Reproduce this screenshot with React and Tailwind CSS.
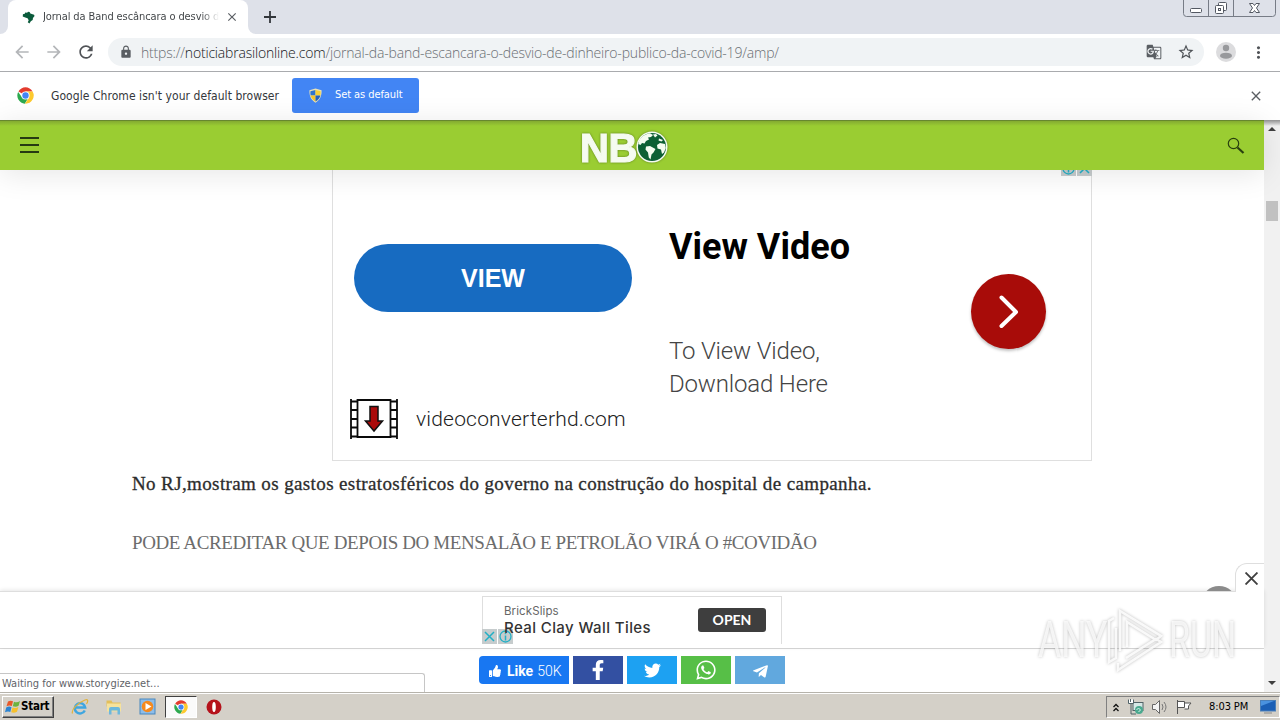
import {
  FaFacebookF,
  FaThumbsUp,
  FaTwitter,
  FaWhatsapp,
  FaTelegramPlane,
} from "react-icons/fa";
import {
  MdArrowBack,
  MdArrowForward,
  MdClose,
  MdLock,
  MdMoreVert,
  MdRefresh,
  MdStarBorder,
  MdGTranslate,
} from "react-icons/md";

const ChromeLogo = ({ className }) => (
  <svg viewBox="0 0 48 48" className={className}>
    <path d="M24 24 4.1 12.5A23 23 0 0 1 43.9 12.5L24 12.5Z" fill="#e33b2e" />
    <path d="M3.2 14A23 23 0 0 0 22 47L33 29 24 34 14 29Z" fill="#2da94f" />
    <path d="M24 12.5H43.9A23 23 0 0 1 22.5 47L34 29.5Z" fill="#fdc92e" />
    <circle cx="24" cy="24" r="11.5" fill="#fff" />
    <circle cx="24" cy="24" r="9" fill="#4285f4" />
  </svg>
);

const Brazil = () => (
  <svg viewBox="0 0 14 14" className="h-[13px] w-[13px]">
    <path
      d="M1 3.5 3 3 3.500 1.500 5.500 2 6.500 .8 8.200 1.200 9 2.800 13 4 13.500 5.500 11.800 7.500 11.500 9.800 9.500 11 8 13.500 6.200 12 7.200 10 6 7.800 3.500 7 .8 5.800Z"
      fill="#0b5b3c"
    />
  </svg>
);

const Shield = () => (
  <svg viewBox="0 0 16 16" className="h-[15px] w-[15px]">
    <path d="M8 .5 14.5 2.5C14.7 8 13 13 8 15.7 3 13 1.3 8 1.5 2.5Z" fill="#e8e2b8" />
    <path d="M8 2v6H2.8C2.5 6.500 2.500 5 2.600 3.500Z" fill="#2f74d0" />
    <path d="M8 2v6h5.200c.3-1.500.3-3 .2-4.500Z" fill="#f7d038" />
    <path d="M8 8v6.400C5 12.700 3.500 10.500 2.800 8Z" fill="#f7c52a" />
    <path d="M8 8v6.400c3-1.700 4.500-3.900 5.200-6.400Z" fill="#2561bd" />
  </svg>
);

const Globe = () => (
  <svg viewBox="0 0 32 32" className="-ml-[1px] h-[32px] w-[32px] shrink-0">
    <circle cx="16" cy="16" r="15.500" fill="#f5fbf0" />
    <circle cx="16" cy="16" r="14" fill="#0d5f34" />
    <path
      d="M3 10C5 6 9 3 14 2.300L17 4 15 6 12 6.500 13 8.500 10 10 8.500 12.500 6 12 4.500 14 2.300 13Z"
      fill="#f5fbf0"
    />
    <path
      d="M10 15.500 14 15 19.500 18 17.500 21.500 15.500 23.500 14.500 28.500 12.800 26.500 12 21.500 9.500 18.500Z"
      fill="#f5fbf0"
    />
    <path
      d="M21 14 24 12 29 13 29.800 17 28 21.500 26 23 25 18.500 21.500 17.500ZM23 7.500 27 9 25.500 10.500 22.500 9.500Z"
      fill="#f5fbf0"
    />
    <path d="M17 3.500 20 3 21.500 4.500 19 6.500Z" fill="#f5fbf0" />
  </svg>
);

const AdInfo = ({ flip }) => (
  <svg
    viewBox="0 0 31 15"
    className={flip ? "h-[15px] w-[31px] -scale-x-100" : "h-[15px] w-[31px]"}
  >
    <path d="M0 0h15v15H0zM16 0h15v15H16z" fill="#c6cccd" />
    <circle cx="7.500" cy="7.500" r="5.500" fill="none" stroke="#22b0c6" strokeWidth="1.300" />
    <path d="M7.500 3.800v1.500M7.500 6.500v5" stroke="#22b0c6" strokeWidth="1.500" />
    <path d="M19 3l9 9M28 3l-9 9" stroke="#22b0c6" strokeWidth="1.500" />
  </svg>
);

const FilmIcon = () => (
  <svg viewBox="0 0 48 40" className="h-[40px] w-[48px]">
    <path
      d="M1 0v40M47 0v40M7.500 1h33v37h-33zM1 2.500h6M1 11h6M1 20h6M1 28.500h6M1 37.500h6M41 2.500h6M41 11h6M41 20h6M41 28.500h6M41 37.500h6"
      fill="none"
      stroke="#0a0a0a"
      strokeWidth="1.800"
    />
    <path
      d="M20 7.500h8v14.500h4.500L24 32 15.500 22H20Z"
      fill="#ab0b0b"
      stroke="#111"
      strokeWidth="1.500"
    />
  </svg>
);

const WindowButtons = () => (
  <svg viewBox="0 0 94 17" className="mr-[3px] h-[17px] w-[94px]">
    <path
      d="M.5 0v13.500a3 3 0 0 0 3 3h86a3 3 0 0 0 3-3V0M25.500 0v16M50.500 0v16"
      fill="none"
      stroke="#777c86"
    />
    <g fill="#fff" stroke="#535862">
      <rect x="7.500" y="8.500" width="11" height="4" rx="1" />
      <rect x="35.500" y="2.500" width="8" height="8" rx="1" />
      <rect x="32.500" y="5.500" width="8" height="8" rx="1" />
      <rect x="35.500" y="8.500" width="2" height="2" />
      <path d="M66.500 3.500h3.500l1.500 2 1.500-2h3.500l-3 4.500 3 4.500H73l-1.500-2-1.500 2h-3.500l3-4.500Z" />
    </g>
  </svg>
);

const TabStrip = () => (
  <div className="flex h-[34px] items-start justify-between bg-[#dee1e9]">
    <div className="flex h-[34px] items-end">
      <div className="h-2 w-2 bg-white">
        <div className="h-2 w-2 rounded-br-lg bg-[#dee1e9]" />
      </div>
      <div className="flex h-[34px] w-[240px] items-center rounded-t-lg bg-white pl-[14px]">
        <Brazil />
        <div className="ml-[8px] w-[176px] overflow-hidden bg-linear-to-r from-[#3c4043] from-90% to-transparent bg-clip-text font-['DejaVu_Sans_Condensed','DejaVu_Sans',sans-serif] text-[11px] tracking-[-0.1px] whitespace-nowrap text-transparent">
          Jornal da Band escâncara o desvio d
        </div>
        <MdClose className="ml-[6px] h-[14px] w-[14px] text-[#5a5e63]" />
      </div>
      <div className="h-2 w-2 bg-white">
        <div className="h-2 w-2 rounded-bl-lg bg-[#dee1e9]" />
      </div>
      <svg viewBox="0 0 12 12" className="mb-[11px] ml-[8px] h-[12px] w-[12px]">
        <path d="M6 0v12M0 6h12" stroke="#33373c" strokeWidth="1.800" />
      </svg>
    </div>
    <WindowButtons />
  </div>
);

const Toolbar = () => (
  <div className="flex h-[38px] items-center border-b border-[#a9abae] bg-white pb-[1px]">
    <MdArrowBack className="ml-[12px] h-[20px] w-[20px] text-[#b4b6b9]" />
    <MdArrowForward className="ml-[12px] h-[20px] w-[20px] text-[#b4b6b9]" />
    <MdRefresh className="ml-[12px] h-[20px] w-[20px] text-[#505357]" />
    <div className="ml-[12px] flex h-[28px] w-[1096px] items-center rounded-full bg-[#f0f3f5]">
      <MdLock className="ml-[11px] h-[14px] w-[14px] text-[#5a5e63]" />
      <div className="ml-[8px] font-['Open_Sans',sans-serif] text-[14px] font-light tracking-[-0.19px] whitespace-nowrap text-[#6a6e73]">
        https://<span className="text-[#15171a]">noticiabrasilonline.com</span>
        /jornal-da-band-escancara-o-desvio-de-dinheiro-publico-da-covid-19/amp/
      </div>
      <MdGTranslate className="ml-auto h-[16px] w-[16px] text-[#5a5e63]" />
      <MdStarBorder className="mr-[9px] ml-[15px] h-[18px] w-[18px] text-[#4f5358]" />
    </div>
    <svg viewBox="0 0 20 20" className="ml-[12px] h-[20px] w-[20px]">
      <circle cx="10" cy="10" r="10" fill="#dcdcde" />
      <circle cx="10" cy="6" r="3.200" fill="#98999c" />
      <ellipse cx="10" cy="13.700" rx="6" ry="3" fill="#98999c" />
    </svg>
    <MdMoreVert className="ml-[13px] h-[19px] w-[19px] text-[#505357]" />
  </div>
);

const DefaultBrowserBar = () => (
  <div className="flex h-[48px] items-center bg-white pb-[1px] font-['DejaVu_Sans_Condensed','DejaVu_Sans',sans-serif]">
    <ChromeLogo className="ml-[17px] h-[17px] w-[17px]" />
    <span className="ml-[17px] w-[229px] text-[12px] tracking-[0.06px] whitespace-nowrap text-[#34373b]">
      Google Chrome isn't your default browser
    </span>
    <button className="ml-[12px] flex h-[35px] w-[127px] items-center rounded-[3px] bg-[#4285f4] pl-[16px] text-[11px] whitespace-nowrap text-white">
      <Shield />
      <span className="ml-[12px] tracking-[-0.08px]">Set as default</span>
    </button>
    <MdClose className="mr-[16px] ml-auto h-[16px] w-[16px] text-[#5a5e63]" />
  </div>
);

const SiteHeader = () => (
  <header className="relative z-10 flex h-[50px] items-center justify-between border-t border-[#67872f] bg-[#9acd32] bg-linear-to-b from-[#84ab31] to-[#9acd32] to-[5px] px-5 shadow-[0_4px_30px_rgba(0,0,0,0.1)]">
    <div className="flex w-[87px] flex-col gap-[5px] pb-[2px]">
      <div className="h-[2px] w-[19px] bg-[#263a12]" />
      <div className="h-[2px] w-[19px] bg-[#263a12]" />
      <div className="h-[2px] w-[19px] bg-[#263a12]" />
    </div>
    <div className="mt-[2px] -ml-[16px] flex items-center font-['Liberation_Sans',sans-serif] text-[40px] leading-none font-bold text-[#f5fbf0] [-webkit-text-stroke:1.2px_#f5fbf0] [filter:drop-shadow(0_0_1px_#5c7f1c)]">
      <span className="pt-[2px] tracking-[-0.5px]">NB</span>
      <Globe />
    </div>
    <div className="flex w-[87px] justify-end">
      <svg viewBox="0 0 18 18" className="-mr-[1px] h-[18px] w-[18px]">
        <circle cx="6.500" cy="6.500" r="5.200" fill="none" stroke="#29400f" strokeWidth="1.200" />
        <path d="M10.500 10.500 16.500 16" stroke="#29400f" strokeWidth="2.200" />
      </svg>
    </div>
  </header>
);

const VideoAd = () => (
  <div className="relative ml-[332px] flex h-[291px] w-[760px] border-x border-b border-[#dfdfdf] bg-white">
    <div className="absolute -top-[9px] -right-[1px]">
      <AdInfo />
    </div>
    <div className="flex w-[336px] flex-col">
      <div className="mt-[74px] ml-[21px] flex h-[68px] w-[278px] items-center justify-center rounded-full bg-[#176bc1] pt-[2px] font-['Liberation_Sans',sans-serif] text-[25px] font-bold text-white">
        VIEW
      </div>
      <div className="mt-[87px] ml-[17px] flex items-center">
        <FilmIcon />
        <span className="ml-[18px] pt-[2px] font-['Roboto',sans-serif] text-[21px] font-light tracking-[0.2px] text-[#222]">
          videoconverterhd.com
        </span>
      </div>
    </div>
    <div className="w-[302px] font-['Roboto',sans-serif]">
      <div className="mt-[56px] text-[36px] leading-[42px] font-bold tracking-[0px] whitespace-nowrap text-black">
        View Video
      </div>
      <div className="mt-[67px] text-[24px] leading-[33px] font-light tracking-[-0.17px] whitespace-nowrap text-[#444]">
        To View Video,
        <br />
        Download Here
      </div>
    </div>
    <div className="mt-[104px] flex h-[75px] w-[75px] items-center justify-center rounded-full bg-[#a80c09] shadow-[0_2px_3px_rgba(0,0,0,0.25)]">
      <svg viewBox="0 0 20 34" className="ml-[1px] h-[34px] w-[20px]">
        <path
          d="M2.500 2.500 17 17 2.500 31"
          fill="none"
          stroke="#fff"
          strokeWidth="4"
          strokeLinecap="round"
          strokeLinejoin="round"
        />
      </svg>
    </div>
  </div>
);

const Article = () => (
  <div className="pl-[132px] font-['Liberation_Serif',serif] whitespace-nowrap">
    <p className="mt-[11px] text-[19px] leading-[24px] tracking-[0.38px] text-[#2c2c2c] [-webkit-text-stroke:0.3px_#2c2c2c]">
      No RJ,mostram os gastos estratosféricos do governo na construção do
      hospital de campanha.
    </p>
    <p className="mt-[35px] text-[19px] leading-[24px] tracking-[-0.39px] text-[#6c6c6c]">
      PODE ACREDITAR QUE DEPOIS DO MENSALÃO E PETROLÃO VIRÁ O #COVIDÃO
    </p>
  </div>
);

const StickyAd = () => (
  <div className="relative flex h-[57px] justify-center border-t border-[#dedede] bg-white pt-[4px] shadow-[0_-1px_4px_rgba(0,0,0,0.1)]">
    <div className="absolute -top-[6px] right-[27px] h-[5px] w-[36px] overflow-hidden">
      <div className="h-[36px] w-[36px] rounded-full bg-[#8b8b8b]" />
    </div>
    <div className="absolute -top-[29px] right-0 flex h-[29px] w-[29px] items-center justify-center rounded-tl-[12px] border-t border-l border-[#dedede] bg-white">
      <svg viewBox="0 0 12 12" className="ml-[3px] h-[13px] w-[13px]">
        <path d="M.5.5l11 11M11.500.5l-11 11" stroke="#3f3f3f" strokeWidth="1.700" />
      </svg>
    </div>
    <div className="relative flex h-[48px] w-[300px] items-start border-x border-t border-[#dedede] pl-[21px] font-['Inter',sans-serif]">
      <div className="absolute bottom-0 -left-[1px]">
        <AdInfo flip />
      </div>
      <div className="relative w-[194px] pt-[7px]">
        <div className="text-[11.500px] leading-[14px] tracking-[0.1px] text-[#666]">BrickSlips</div>
        <div className="mt-[1px] text-[15px] leading-[18px] font-medium tracking-[0.4px] whitespace-nowrap text-[#333]">
          Real Clay Wall Tiles
        </div>
      </div>
      <button className="mt-[11px] h-[24px] w-[68px] rounded-[3px] bg-[#3e3e3e] pb-[2px] font-['Lato',sans-serif] text-[14px] font-bold text-white">
        OPEN
      </button>
    </div>
  </div>
);

const ShareBar = () => (
  <div className="flex h-[44px] justify-center gap-[4px] border-t border-[#d8d8d8] bg-white pt-[7px] text-white shadow-[0_-1px_3px_rgba(0,0,0,0.08)]">
    <div className="flex h-[28px] w-[90px] items-center rounded-l-[4px] bg-[#1877f2] pt-[2px] pl-[10px] font-['Roboto',sans-serif] text-[14px]">
      <FaThumbsUp className="h-[12px] w-[12px]" />
      <b className="ml-[6px]">Like</b>
      <span className="ml-[4px] font-light">50K</span>
    </div>
    <div className="flex h-[28px] w-[50px] items-center justify-center bg-[#3350a2]">
      <FaFacebookF className="h-[20px] w-[20px]" />
    </div>
    <div className="flex h-[28px] w-[50px] items-center justify-center bg-[#1da1f2]">
      <FaTwitter className="h-[17px] w-[17px]" />
    </div>
    <div className="flex h-[28px] w-[50px] items-center justify-center bg-[#57bf47]">
      <FaWhatsapp className="h-[22px] w-[22px]" />
    </div>
    <div className="flex h-[28px] w-[50px] items-center justify-center bg-[#61a8de] pt-[2px]">
      <FaTelegramPlane className="h-[17px] w-[17px]" />
    </div>
  </div>
);

const Scrollbar = () => (
  <div className="flex h-full w-[16px] flex-col items-center bg-linear-to-b from-[#929292] to-[#f1f1f1] to-[6px]">
    <svg viewBox="0 0 8 4" className="mt-[7px] h-[4px] w-[8px]">
      <path d="M0 4 4 0 8 4Z" fill="#3f3f3f" />
    </svg>
    <div className="mt-[70px] h-[20px] w-[12px] bg-[#c1c1c1]" />
    <svg viewBox="0 0 8 4" className="mt-auto mb-[7px] h-[4px] w-[8px]">
      <path d="M0 0 4 4 8 0Z" fill="#3f3f3f" />
    </svg>
  </div>
);

const Watermark = () => (
  <div className="absolute bottom-[20px] left-[1038px] flex h-[64px] w-[196px] items-center justify-between font-['Roboto',sans-serif] text-[50px] leading-none text-white/75 [filter:drop-shadow(0_0_1.5px_rgba(0,0,0,0.32))]">
    <span className="block w-[68px] origin-left scale-x-[0.71]">ANY</span>
    <svg viewBox="0 0 60 64" className="h-[64px] w-[60px] shrink-0">
      <path
        d="M8 10 3 13v41l7-4V20M14 43V3l41 25-5 4-29-18v25M12 55v7l43-28-5-3-30 19"
        fill="none"
        stroke="#fff"
        strokeOpacity="0.85"
        strokeWidth="2.500"
      />
    </svg>
    <span className="block w-[68px] origin-left translate-x-[3px] scale-x-[0.68]">RUN</span>
  </div>
);

const Taskbar = () => (
  <div className="flex h-[28px] items-center border-t border-[#b9b6ae] bg-[#d4d0c8] pt-[1px] font-['DejaVu_Sans_Condensed','DejaVu_Sans',sans-serif] text-[11px] text-black shadow-[inset_0_1px_0_#fff]">
    <div className="ml-[2px] flex h-[22px] w-[52px] items-center border border-t-white border-r-[#404040] border-b-[#404040] border-l-white pl-[2px] font-bold shadow-[inset_-1px_-1px_0_#808080]">
      <svg viewBox="0 0 16 16" className="h-[16px] w-[16px] shrink-0">
        <path d="M3 2.500C5 1.300 6.500 1.500 8 2.300L6.800 7C5.200 6.200 3.500 6.200 1.500 7.300Z" fill="#e8592a" />
        <path d="M9 2.700C11 3.600 13 3.300 15 2L13.600 6.800C11.800 8 9.800 8 7.800 7.300Z" fill="#6cb33f" />
        <path d="M1.200 8.400C3.200 7.300 5 7.300 6.500 8.200L5.300 13C3.500 12.200 2 12.300 0 13.300Z" fill="#2b84d2" />
        <path d="M7.500 8.500C9.500 9.300 11.500 9 13.400 8L12 12.700C10 14 8 14 6.200 13.300Z" fill="#f6c02c" />
      </svg>
      <span className="text-[11.500px] tracking-[-0.25px]">Start</span>
    </div>
    <svg viewBox="0 0 18 18" className="ml-[17px] h-[18px] w-[18px]">
      <path
        d="M13.800 12.500A5.200 5.200 0 1 1 14.200 9.500H5"
        fill="none"
        stroke="#3fa6e0"
        strokeWidth="2.400"
      />
      <path d="M1.500 15.500C0 12 6 5 14 2c3-1 3.500 1 1.500 4" fill="none" stroke="#e2b33a" strokeWidth="1.200" />
    </svg>
    <svg viewBox="0 0 18 18" className="ml-[16px] h-[18px] w-[18px]">
      <path d="M1.500 2.500h5l1 2h8v4h-14z" fill="#e3bf5a" />
      <path d="M2 5.500h14v8H2z" fill="#f6e29c" />
      <path d="M4 16.500V11q0-2 2-2h7q2 0 2 2v5.500h-2.500v-4h-6v4z" fill="#6cb8dc" />
    </svg>
    <svg viewBox="0 0 18 18" className="ml-[16px] h-[18px] w-[18px]">
      <rect x="1" y="1" width="15" height="15" fill="#8dbdea" stroke="#4987bd" />
      <circle cx="8.500" cy="8.500" r="5.800" fill="#f58a1f" />
      <path d="M6.500 5v7l6-3.500z" fill="#fff" />
    </svg>
    <div className="ml-[8px] flex h-[22px] w-[32px] items-center justify-center border border-t-[#404040] border-r-white border-b-white border-l-[#404040] bg-[#fafafa]">
      <ChromeLogo className="h-[14px] w-[14px]" />
    </div>
    <svg viewBox="0 0 16 16" className="ml-[9px] h-[16px] w-[16px]">
      <circle cx="8" cy="8" r="7.500" fill="#b5121b" />
      <ellipse cx="8" cy="8" rx="1.800" ry="5" fill="#fff" />
    </svg>
    <div className="ml-auto flex h-[22px] w-[174px] items-center border border-t-[#808080] border-r-white border-b-white border-l-[#808080] pl-[5px]">
      <svg viewBox="0 0 8 8" className="h-[9px] w-[8px]">
        <path d="M1.500 3.500 4 1l2.500 2.500M1.500 7.500 4 5l2.500 2.500" fill="none" stroke="#111" strokeWidth="1.300" />
      </svg>
      <svg viewBox="0 0 16 16" className="ml-[8px] h-[16px] w-[16px]">
        <rect x="5" y="3.500" width="10" height="8" fill="#d5e8e6" stroke="#516267" />
        <path d="M3 5v10h5" fill="none" stroke="#516267" />
        <path d="M.5.5v4h5v-4M2.500 0v3" fill="#fff" stroke="#516267" />
        <circle cx="11" cy="11" r="4" fill="#4aa98f" />
        <path d="M8.500 11l2-2 2 2-2 2" fill="none" stroke="#d9f4ee" />
      </svg>
      <svg viewBox="0 0 16 16" className="ml-[8px] h-[16px] w-[16px]">
        <path d="M.5 5.500h3l4-4v13l-4-4h-3z" fill="#f3f3f3" stroke="#666" />
        <path d="M10 5q2 3 0 6M12 3q4 5 0 10" fill="none" stroke="#777" />
      </svg>
      <svg viewBox="0 0 16 16" className="ml-[8px] h-[16px] w-[16px]">
        <path d="M1.500 1v14M1.500 2.500h7v6h-7M8.500 4h6.500l-2.500 3 0 3h-4" fill="#fff" stroke="#555" />
      </svg>
      <span className="ml-[17px] w-[40px] tracking-[-0.1px] whitespace-nowrap">8:03 PM</span>
      <svg viewBox="0 0 16 14" className="ml-[11px] h-[14px] w-[16px]">
        <rect width="15" height="10.500" x=".5" y=".5" fill="#1b5fb5" stroke="#4a7fb8" />
        <path d="M1 6 14 1H1z" fill="#4a92df" />
        <path d="M4 13h8" stroke="#888" />
      </svg>
    </div>
  </div>
);

const App = () => {
  return (
    <div className="flex h-[720px] w-[1280px] flex-col overflow-hidden bg-white">
      <TabStrip />
      <Toolbar />
      <DefaultBrowserBar />
      <div className="relative flex h-[572px]">
        <div className="flex w-[1264px] flex-col">
          <SiteHeader />
          <main className="h-[421px] overflow-hidden">
            <VideoAd />
            <Article />
          </main>
          <StickyAd />
          <ShareBar />
        </div>
        <Scrollbar />
        <div className="absolute bottom-0 left-0 h-[19px] w-[425px] rounded-tr-[3px] border-t border-r border-[#c6c6c6] bg-white pl-[2px] font-['DejaVu_Sans_Condensed','DejaVu_Sans',sans-serif] text-[11px] leading-[19px] text-[#5f6368]">
          Waiting for www.storygize.net...
        </div>
        <Watermark />
      </div>
      <Taskbar />
    </div>
  );
};

export default App;
